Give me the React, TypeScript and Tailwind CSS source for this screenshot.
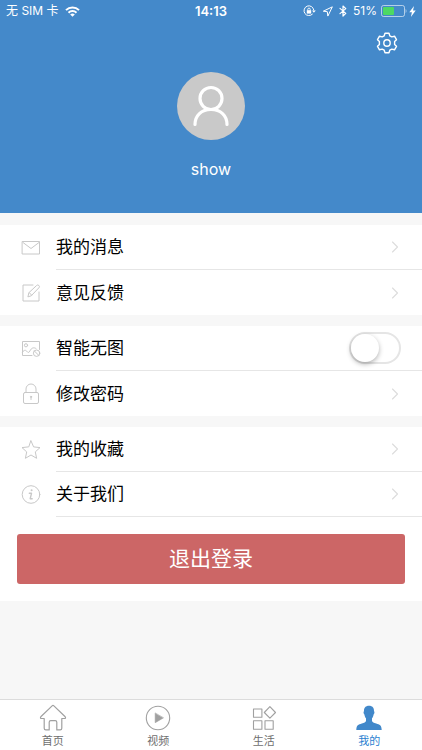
import { useState } from "react";
import type { ReactNode } from "react";

const stroke = {
  fill: "none",
  stroke: "currentColor",
  strokeLinecap: "round" as const,
  strokeLinejoin: "round" as const,
};

function StatusBar() {
  return (
    <div className="grid h-[22px] grid-cols-3 items-center px-1.5 text-[12px] leading-5">
      <div className="flex items-center gap-1.5 whitespace-nowrap">
        <span>无 SIM 卡</span>
        <svg width="15" height="11" viewBox="0 0 15 11" fill="none" stroke="currentColor" strokeWidth="2">
          <path d="M1 4.1a9.2 9.2 0 0 1 13 0" />
          <path d="M3.5 6.7a5.7 5.7 0 0 1 8 0" />
          <path d="M7.5 10.8 5.2 8.5a3.3 3.3 0 0 1 4.6 0z" fill="currentColor" stroke="none" />
        </svg>
      </div>
      <div className="text-center text-[13px] font-semibold">14:13</div>
      <div className="flex items-center justify-end">
        <svg width="13" height="12" viewBox="0 0 13 12" {...stroke}>
          <path d="M9.4 9.2A4.9 4.9 0 1 1 10.8 5" strokeWidth="1" />
          <path d="M9 5.4h3.8L10.9 7.8z" fill="currentColor" stroke="none" />
          <rect x="3.8" y="5.2" width="4.4" height="3.4" fill="currentColor" stroke="none" />
          <path d="M4.8 5.2V4.3a1.2 1.2 0 0 1 2.4 0v.9" strokeWidth=".9" />
        </svg>
        <svg className="ml-1.5" width="11" height="11" viewBox="0 0 11 11" {...stroke}>
          <path d="M10 1 1.3 5.2l4 .5.5 4z" strokeWidth="1" />
        </svg>
        <svg className="ml-1.5" width="8" height="12" viewBox="0 0 8 12" {...stroke}>
          <path d="M1 3.4 6.8 8.4 4 11V1l2.8 2.6L1 8.6" strokeWidth="1.2" />
        </svg>
        <span className="ml-1.5">51%</span>
        <svg className="ml-1" width="26" height="12" viewBox="0 0 26 12">
          <rect x=".5" y=".5" width="23" height="11" rx="2" fill="none" stroke="currentColor" opacity=".6" />
          <rect x="2" y="2" width="11" height="8" rx="1" fill="#4cd964" />
          <path d="M24.6 4v4c1.2-.6 1.2-3.4 0-4" fill="currentColor" opacity=".6" />
        </svg>
        <svg className="ml-0.5" width="7" height="11" viewBox="0 0 7 11" fill="currentColor">
          <path d="M5 0 .3 6.2h2.6L1.9 11l4.8-6.4H4z" />
        </svg>
      </div>
    </div>
  );
}

const icons = {
  mail: (
    <svg width="20" height="20" viewBox="0 0 20 20" {...stroke}>
      <rect x="1.5" y="3.5" width="17" height="12.5" />
      <path d="m2 4.5 8 6 8-6" />
    </svg>
  ),
  edit: (
    <svg width="20" height="20" viewBox="0 0 20 20" {...stroke}>
      <path d="M12 2H2v16h16V9" />
      <path d="m7 13.5.9-3.8 7.7-7.2a1.6 1.6 0 0 1 2.3 2.3l-7.4 7.7zM8.4 9.8l2.1 2.2" />
    </svg>
  ),
  image: (
    <svg width="20" height="20" viewBox="0 0 20 20" {...stroke}>
      <path d="M11 16.5H1.5v-14h17v8" />
      <circle cx="5" cy="6.3" r="1.6" />
      <path d="M1.5 13c2-2.5 3.4-2 4.5-.5s2 1.2 3-.7c1.6-3 3.6-3.8 6-2.3" />
      <circle cx="15.6" cy="14.2" r="3.2" />
      <path d="m13.4 12 4.4 4.4" />
    </svg>
  ),
  lock: (
    <svg width="20" height="22" viewBox="0 0 20 22" {...stroke}>
      <rect x="2.5" y="9.5" width="15" height="11" rx="1.5" />
      <path d="M5 9.5V6a5 5 0 0 1 10 0v3.5M10 14v2.5" />
      <circle cx="10" cy="13.8" r=".6" />
    </svg>
  ),
  star: (
    <svg width="20" height="20" viewBox="0 0 20 20" {...stroke}>
      <path d="m10 .9 2.6 6 6.4.7-4.7 4.3 1.3 6.4-5.6-3.3-5.6 3.3 1.3-6.4L1 7.6l6.4-.7z" />
    </svg>
  ),
  info: (
    <svg width="20" height="20" viewBox="0 0 20 20" {...stroke}>
      <circle cx="10" cy="9.5" r="8.8" />
      <circle cx="10.6" cy="5.2" r="1" fill="currentColor" stroke="none" />
      <path d="M8.3 8.3h2.2L9.2 13.7h2" strokeWidth="1.4" />
    </svg>
  ),
};

function Row({ icon, label, last, children }: { icon: ReactNode; label: string; last?: boolean; children?: ReactNode }) {
  const body = (
    <>
      <span className="flex w-14 shrink-0 items-center pl-[21px] text-[#c8c8c8]">{icon}</span>
      <span className={`flex h-full flex-1 items-center justify-between pr-[21px] ${last ? "" : "border-b border-[#e6e6e6]"}`}>
        <span className="pt-0.5 text-[17px] text-black">{label}</span>
        {children ?? (
          <svg className="text-[#dcdcdc]" width="12" height="12" viewBox="0 0 12 12" {...stroke}>
            <path d="m3.5 1 5 5-5 5" strokeWidth="1.1" />
          </svg>
        )}
      </span>
    </>
  );

  if (children) return <label className="flex h-[45px] items-center">{body}</label>;
  return (
    <a href="#" className="flex h-[45px] items-center">
      {body}
    </a>
  );
}

const tabs = [
  {
    label: "首页",
    icon: (
      <svg width="28" height="28" viewBox="0 0 28 28" {...stroke}>
        <path
          d="M13.1 1.9 1.8 12.8c-.7.8-.3 1.7.7 1.7h2.7v9.8c0 1 .6 1.6 1.6 1.6h3.4v-7.6c0-1 .6-1.6 1.6-1.6h4.4c1 0 1.6.6 1.6 1.6v7.6h3.4c1 0 1.6-.6 1.6-1.6v-9.8h2.7c1 0 1.4-.9.7-1.7L14.9 1.9a1.3 1.3 0 0 0-1.8 0z"
          strokeWidth="1.2"
        />
      </svg>
    ),
  },
  {
    label: "视频",
    icon: (
      <svg width="28" height="28" viewBox="0 0 28 28" {...stroke}>
        <circle cx="14" cy="14" r="11.7" strokeWidth="1.1" />
        <path d="M11.2 9.3v9.4l8-4.7z" fill="currentColor" strokeWidth=".6" />
      </svg>
    ),
  },
  {
    label: "生活",
    icon: (
      <svg width="28" height="28" viewBox="0 0 28 28" {...stroke} strokeWidth="1.1">
        <rect x="3.5" y="5" width="8.4" height="8.2" />
        <rect x="3.5" y="16.8" width="8.4" height="8.4" />
        <rect x="15" y="16.8" width="8.2" height="8.4" />
        <path d="m19.9 2.6 5.6 5.9-5.6 5.7-5.6-5.7z" />
      </svg>
    ),
  },
  {
    label: "我的",
    active: true,
    icon: (
      <svg width="28" height="28" viewBox="0 0 28 28" fill="#4188ca">
        <path d="M14 1.7c3.4 0 5.2 2.1 5 5.5.8.5.5 2.5-.4 3.3-.3 1.9-.9 3-1.6 3.8v2.6c.4 1.4 1.7 1.7 4.2 2.5 3.4 1.1 5.4 1.5 5.5 6.6H1.3c.1-5.1 2.1-5.5 5.5-6.6 2.5-.8 3.8-1.1 4.2-2.5v-2.6c-.7-.8-1.3-1.9-1.6-3.8-.9-.8-1.2-2.8-.4-3.3-.2-3.4 1.6-5.5 5-5.5z" />
      </svg>
    ),
  },
];

export default function App() {
  const [noImage, setNoImage] = useState(false);

  return (
    <div className="flex min-h-screen flex-col bg-[#f7f7f7] font-[Inter,'Noto_Sans_CJK_SC',sans-serif]">
      <header className="h-[213px] bg-[#4489ca] text-white">
        <StatusBar />
        <div className="flex justify-end pr-6">
          <button type="button" aria-label="设置" className="flex h-[42px] items-center">
            <svg width="22" height="22" viewBox="0 0 22 22" {...stroke} strokeWidth="1.4">
              <path d="M9 1.2h4l.8 2.6 2 1.1 2.7-.7 2 3.5-1.9 1.9v2.8l1.9 1.9-2 3.5-2.7-.7-2 1.1-.8 2.6H9l-.8-2.6-2-1.1-2.7.7-2-3.5 1.9-1.9V9.6L1.5 7.7l2-3.5 2.7.7 2-1.1z" />
              <circle cx="11" cy="11" r="3.2" />
            </svg>
          </button>
        </div>
        <div className="mt-2 flex flex-col items-center gap-[15px]">
          <div className="flex size-[68px] items-center justify-center rounded-full bg-[#c9c9c9]">
            <svg width="38" height="42" viewBox="0 0 38 42" {...stroke} strokeWidth="3.2">
              <circle cx="19" cy="13.5" r="11" />
              <path d="M3 39.5c0-9.2 6.5-15 16-15s16 5.8 16 15" />
            </svg>
          </div>
          <span className="text-[16px] leading-7">show</span>
        </div>
      </header>

      <main className="flex flex-1 flex-col gap-[11px] pt-3">
        <section className="bg-white">
          <Row icon={icons.mail} label="我的消息" />
          <Row icon={icons.edit} label="意见反馈" last />
        </section>

        <section className="bg-white">
          <Row icon={icons.image} label="智能无图">
            <input
              type="checkbox"
              role="switch"
              checked={noImage}
              onChange={(e) => setNoImage(e.target.checked)}
              className="h-8 w-[52px] appearance-none rounded-full border-2 border-[#e5e5e5] bg-white before:block before:size-7 before:rounded-full before:bg-white before:shadow-[0_2px_5px_rgba(0,0,0,0.3)] before:transition-transform checked:border-[#4cd964] checked:bg-[#4cd964] checked:before:translate-x-5"
            />
          </Row>
          <Row icon={icons.lock} label="修改密码" last />
        </section>

        <section className="bg-white">
          <Row icon={icons.star} label="我的收藏" />
          <Row icon={icons.info} label="关于我们" />
          <div className="p-[17px]">
            <button type="button" className="h-[50px] w-full rounded-[3px] bg-[#cc6666] text-[21px] text-white">
              退出登录
            </button>
          </div>
        </section>
      </main>

      <nav className="grid grid-cols-4 border-t border-[#dcdcdc] bg-white">
        {tabs.map((tab) => (
          <a
            key={tab.label}
            href="#"
            className={`flex h-[50px] flex-col items-center pt-1 text-[11px] leading-[18px] ${tab.active ? "text-[#2a7fd0]" : "text-[#6e6e6e]"}`}
          >
            <span className={tab.active ? "" : "text-[#a0a0a0]"}>{tab.icon}</span>
            {tab.label}
          </a>
        ))}
      </nav>
    </div>
  );
}
